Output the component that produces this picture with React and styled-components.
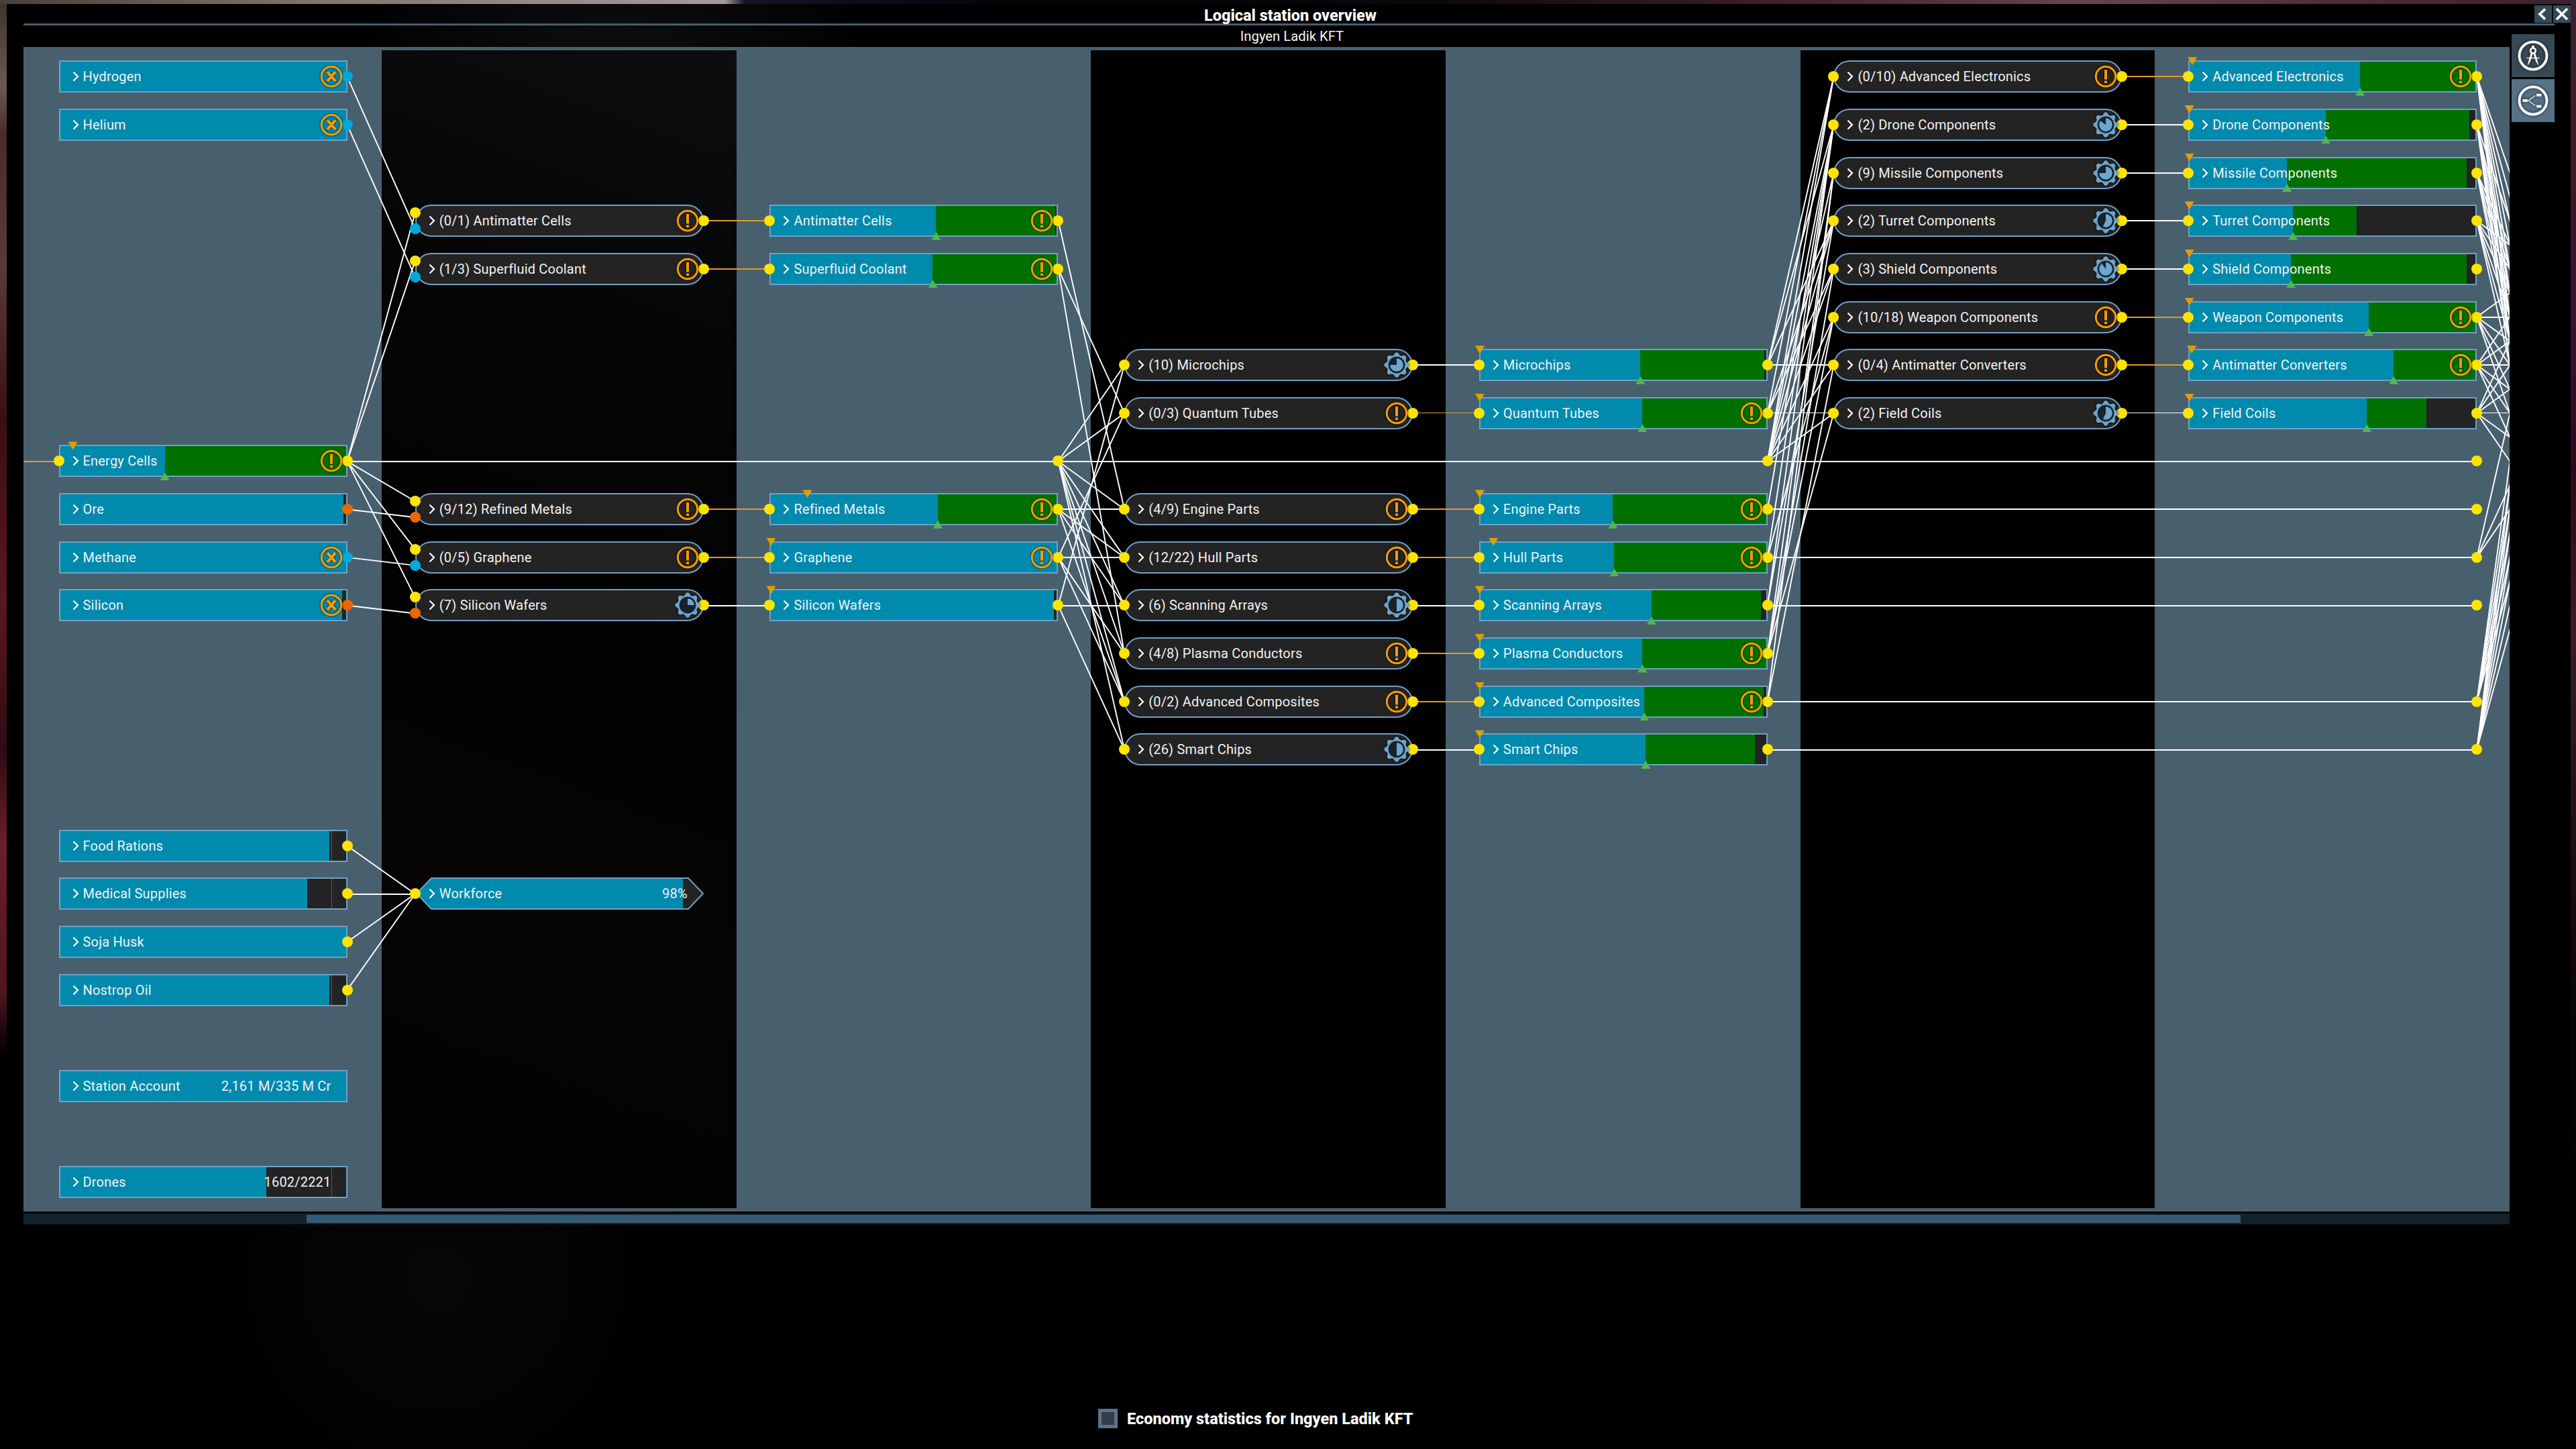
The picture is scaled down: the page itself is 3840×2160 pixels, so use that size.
import React from "react";
import styled, { createGlobalStyle, css } from "styled-components";

const c = {
  slate: "#485f6e",
  teal: "#008aad",
  green: "#007000",
  dark: "#232323",
  edge: "#6fa1c5",
  yellow: "#ffe400",
  blue: "#00a9dc",
  orange: "#eb6800",
  link: "#e59a28",
  warn: "#ff9c00",
};

const ROWS = 24;
const GRID_TOP = 8.4;
const GRID_H = 1720;
const NODE_W = 430;
const FIRST_W = 534;
const COL_W = 3172 / 6;

const GlobalStyle = createGlobalStyle`
  *, *::before, *::after { box-sizing: border-box; }
  body { margin: 0; background: #000; font-family: Roboto, "Liberation Sans", sans-serif; }
`;

const Page = styled.div`
  width: 3840px;
  height: 2160px;
  overflow: hidden;
  padding: 6px 8px 0 10px;
  background:
    linear-gradient(90deg, #4b3f3a 0, #85766f 500px, #a39a9c 1080px, #14142a 1110px, #050308 1500px, #08060a 2100px, #3a1c2a 2600px, #6a4250 3100px, #4c2c3a 3500px, #3c2230 3840px) 0 0 / 100% 6px no-repeat,
    linear-gradient(180deg, #3c332c 0, #6b5a50 130px, #4a2c26 200px, #5a3a34 400px, #3a0e16 620px, #5a1624 900px, #300a12 1120px, #6a1e2c 1260px, #501420 1480px, #000 1572px) 0 0 / 10px 100% no-repeat,
    linear-gradient(180deg, #3c2230 0, #3a1228 500px, #2a0a1c 700px, #3a1c2a 950px, #24101a 1200px, #0a0408 1500px, #000 1800px) 100% 0 / 8px 100% no-repeat,
    #000;
`;

const Window = styled.section`
  height: 2154px;
  padding-left: 25px;
  color: #f4f4f4;
  background:
    radial-gradient(ellipse 420px 500px at 900px 200px, #101114, transparent),
    radial-gradient(ellipse 420px 420px at 640px 1900px, #080505, transparent),
    #000;
`;

const Header = styled.header`
  display: flex;
  height: 29px;
  padding-top: 2px;
  gap: 2px;
`;

const Title = styled.h1`
  flex: 1;
  margin: 0;
  padding: 2px 0 0 36px;
  font-size: 23.5px;
  font-weight: 800;
  line-height: 27px;
  text-align: center;
  position: relative;
  z-index: 1;
  color: #fff;
`;

const WindowButton = styled.button`
  width: 26px;
  height: 26px;
  padding: 0;
  border: 0;
  background: #354a57;
  display: grid;
  place-items: center;
`;

const Divider = styled.div`
  width: 3773px;
  height: 3px;
  background: ${c.slate};
`;

const Main = styled.main`
  display: flex;
  gap: 3px;
`;

const Content = styled.div`
  width: 3706px;
`;

const Subtitle = styled.h2`
  height: 32px;
  margin: 0;
  padding: 4px 0 0 76px;
  font-size: 20.3px;
  font-weight: 400;
  line-height: 25px;
  text-align: center;
`;

const Panel = styled.div`
  position: relative;
  height: 1736px;
  overflow: hidden;
  display: grid;
  grid-template-columns: ${FIRST_W}px repeat(6, 1fr);
  background: ${c.slate};
`;

const Column = styled.div`
  display: grid;
  grid-template-rows: repeat(${ROWS}, ${GRID_H / ROWS}px);
  align-items: center;
  justify-items: center;
  margin: 5px 0;
  padding: ${GRID_TOP - 5}px 0 0 1px;
  background: ${(p) => (p.$index % 2 ? (p.$index === 1 ? "linear-gradient(200deg, #0d0e10 0, #050506 420px, #020202 900px, #060404 1300px, #020202 100%)" : "#010101") : "transparent")};
`;

const Links = styled.svg`
  position: absolute;
  inset: 0;
  z-index: 1;
  pointer-events: none;
`;

const Node = styled.div`
  position: relative;
  z-index: 2;
  grid-row: ${(p) => p.$row + 1};
  width: ${NODE_W}px;
  height: ${(p) => (p.$waypoint ? 0 : 48)}px;
  display: flex;
  align-items: center;
`;

const frame = css`
  position: absolute;
  inset: 0;
  border: 2px solid ${c.edge};
  overflow: hidden;
`;

const StorageFrame = styled.div`
  ${frame}
  background: ${(p) =>
    p.$seam
      ? `linear-gradient(90deg, transparent 404px, ${c.slate} 404px, ${c.slate} 405px, transparent 405px), ${c.dark}`
      : c.dark};
`;

const ProductionFrame = styled.div`
  ${frame}
  border-radius: 24px;
  background: ${c.dark};
`;

const Fill = styled.div`
  position: absolute;
  top: 0;
  bottom: 0;
  left: 0;
  background: ${(p) => p.$color};
`;

const HexFrame = styled.svg`
  position: absolute;
  inset: 0;
`;

const Label = styled.div`
  position: relative;
  flex: 1;
  display: flex;
  align-items: center;
  padding: 0 24px 0 20px;
  font-size: 20px;
  letter-spacing: 0.2px;
  line-height: 24px;
  white-space: nowrap;
  color: #f2f2f2;
`;

const Arrow = styled.svg`
  width: 10px;
  height: 16px;
  margin-right: 6px;
  flex: none;
`;

const Value = styled.span`
  margin-left: auto;
`;

const Dot = styled.i`
  position: absolute;
  left: ${(p) => (p.$side === "in" ? 0 : NODE_W)}px;
  top: calc(50% + ${(p) => p.$offset || 0}px);
  width: 16px;
  height: 16px;
  margin: -8px 0 0 -8px;
  border-radius: 50%;
  background: ${(p) => p.$color};
`;

const Marker = styled.i`
  position: absolute;
  width: 14px;
  height: 12px;
  margin-left: -7px;
  ${(p) =>
    p.$down
      ? css`
          top: -5px;
          background: #dfa000;
          clip-path: polygon(0 0, 100% 0, 50% 100%);
        `
      : css`
          bottom: -4.5px;
          background: #4fb852;
          clip-path: polygon(50% 0, 100% 100%, 0 100%);
        `}
`;

const StatusIcon = styled.svg`
  position: absolute;
  right: 4px;
  top: calc(50% - 20px);
  width: 40px;
  height: 40px;
  filter: drop-shadow(0 0 1.5px rgba(0, 0, 0, 0.8));
`;

const Sidebar = styled.nav`
  display: flex;
  flex-direction: column;
  gap: 3px;
  padding-top: 13px;
`;

const SideButton = styled.button`
  width: 64px;
  height: 64px;
  padding: 0;
  border: 0;
  display: grid;
  place-items: center;
  background: ${(p) => (p.$active ? "#567287" : "#364a56")};
`;

const SideIcon = styled.svg`
  width: 50px;
  height: 50px;
  filter: drop-shadow(0 0 2px rgba(0, 0, 0, 0.7));
`;

const ScrollTrack = styled.div`
  height: 16px;
  margin-top: 3px;
  padding: 2px 0 2px 422px;
  background: #14232b;
`;

const ScrollThumb = styled.div`
  width: 2883px;
  height: 12px;
  background: #345b76;
`;

const Footer = styled.label`
  display: flex;
  align-items: center;
  gap: 14px;
  margin-top: 275px;
  padding-left: 1602px;
  height: 29px;
  font-size: 23.5px;
  font-weight: 800;
  color: #fff;
`;

const CheckBox = styled.span`
  width: 29px;
  height: 29px;
  border: 5px solid #5a7489;
  background: #2f3f4a;
`;

const S = (row, name, fill, extra = {}) => ({ kind: "storage", row, name, fill, out: c.yellow, ...extra });
const P = (row, name, status, extra = {}) => ({
  kind: "production", row, name, status, inputs: [[c.yellow, 0]], out: c.yellow, ...extra,
});
const W = (row) => ({ kind: "waypoint", row, out: c.yellow });
const two = (color) => ({ inputs: [[c.yellow, -12], [color, 12]] });
const fed = { inputs: [[c.yellow, 0]] };

const columns = [
  [
    S(0, "Hydrogen", 428, { out: c.blue, status: "x" }),
    S(1, "Helium", 428, { out: c.blue, status: "x" }),
    S(8, "Energy Cells", 158, { ...fed, stock: 428, low: 21, status: "!" }),
    S(9, "Ore", 424, { out: c.orange }),
    S(10, "Methane", 428, { out: c.blue, status: "x" }),
    S(11, "Silicon", 422, { out: c.orange, status: "x" }),
    S(16, "Food Rations", 403),
    S(17, "Medical Supplies", 370),
    S(18, "Soja Husk", 428),
    S(19, "Nostrop Oil", 403),
    S(21, "Station Account", 428, { out: null, value: "2,161 M/335 M Cr" }),
    S(23, "Drones", 309, { out: null, value: "1602/2221" }),
  ],
  [
    P(3, "(0/1) Antimatter Cells", "!", two(c.blue)),
    P(4, "(1/3) Superfluid Coolant", "!", two(c.blue)),
    P(9, "(9/12) Refined Metals", "!", two(c.orange)),
    P(10, "(0/5) Graphene", "!", two(c.blue)),
    P(11, "(7) Silicon Wafers", 0.25, two(c.orange)),
    { kind: "workforce", row: 17, name: "Workforce", fill: 399, value: "98%", ...fed },
  ],
  [
    S(3, "Antimatter Cells", 248, { ...fed, stock: 426, status: "!" }),
    S(4, "Superfluid Coolant", 243, { ...fed, stock: 428, status: "!" }),
    W(8),
    S(9, "Refined Metals", 250.5, { ...fed, stock: 428, low: 56, status: "!" }),
    S(10, "Graphene", 428, { ...fed, low: 2, status: "!" }),
    S(11, "Silicon Wafers", 424, { ...fed, low: 2 }),
  ],
  [
    P(6, "(10) Microchips", 0.75),
    P(7, "(0/3) Quantum Tubes", "!"),
    P(9, "(4/9) Engine Parts", "!"),
    P(10, "(12/22) Hull Parts", "!"),
    P(11, "(6) Scanning Arrays", 0.5),
    P(12, "(4/8) Plasma Conductors", "!"),
    P(13, "(0/2) Advanced Composites", "!"),
    P(14, "(26) Smart Chips", 0.5),
  ],
  [
    S(6, "Microchips", 240.5, { ...fed, stock: 425, low: 1 }),
    S(7, "Quantum Tubes", 243.5, { ...fed, stock: 428, low: 1, status: "!" }),
    W(8),
    S(9, "Engine Parts", 199.5, { ...fed, stock: 428, low: 1, status: "!" }),
    S(10, "Hull Parts", 201.5, { ...fed, stock: 428, low: 21.5, status: "!" }),
    S(11, "Scanning Arrays", 257, { ...fed, stock: 420, low: 1 }),
    S(12, "Plasma Conductors", 243.5, { ...fed, stock: 428, low: 1, status: "!" }),
    S(13, "Advanced Composites", 246.5, { ...fed, stock: 424, low: 1, status: "!" }),
    S(14, "Smart Chips", 248.5, { ...fed, stock: 411.5, low: 1 }),
  ],
  [
    P(0, "(0/10) Advanced Electronics", "!"),
    P(1, "(2) Drone Components", 0.85),
    P(2, "(9) Missile Components", 0.75),
    P(3, "(2) Turret Components", 0.57),
    P(4, "(3) Shield Components", 0.9),
    P(5, "(10/18) Weapon Components", "!"),
    P(6, "(0/4) Antimatter Converters", "!"),
    P(7, "(2) Field Coils", 0.57),
  ],
  [
    S(0, "Advanced Electronics", 256, { ...fed, stock: 428, low: 6, status: "!" }),
    S(1, "Drone Components", 205, { ...fed, stock: 419, low: 1.5 }),
    S(2, "Missile Components", 147, { ...fed, stock: 415, low: 1.5 }),
    S(3, "Turret Components", 156, { ...fed, stock: 251, low: 1.5 }),
    S(4, "Shield Components", 153, { ...fed, stock: 415, low: 1.5 }),
    S(5, "Weapon Components", 269, { ...fed, stock: 428, low: 1.5, status: "!" }),
    S(6, "Antimatter Converters", 306, { ...fed, stock: 428, low: 5, status: "!" }),
    S(7, "Field Coils", 266, { ...fed, stock: 355, low: 1.5 }),
    W(8), W(9), W(10), W(11), W(13), W(14),
  ],
];

const midX = (k) => 0.5 + (k === 0 ? FIRST_W / 2 : FIRST_W + COL_W * (k - 0.5));
const inX = (k) => midX(k) - NODE_W / 2;
const outX = (k) => midX(k) + NODE_W / 2;
const rowY = (r) => GRID_TOP + (GRID_H / ROWS) * (r + 0.5);

const links = [];
const join = (k, from, to, offset = 0) =>
  links.push({ x1: outX(k), y1: rowY(from), x2: inX(k + 1), y2: rowY(to) + offset });

join(0, 0, 3, 12);
join(0, 1, 4, 12);
[3, 4, 9, 10, 11].forEach((r) => join(0, 8, r, -12));
[9, 10, 11].forEach((r) => join(0, r, r, 12));
[16, 17, 18, 19].forEach((r) => join(0, r, 17));

const refine = {
  3: [9],
  4: [7, 12],
  8: [6, 7, 9, 10, 11, 12, 13, 14],
  9: [9, 10, 11, 13],
  10: [7, 10, 12, 13],
  11: [6, 11, 14],
};
const assemble = {
  6: [0, 1, 3, 6],
  7: [0, 3, 4, 7],
  8: [0, 1, 2, 3, 4, 5, 6, 7],
  9: [1],
  10: [1, 5],
  11: [1, 3],
  12: [2, 4, 5, 7],
  13: [2, 6],
};
const equip = {
  0: [4, 5, 6, 7, 8, 9, 10, 11],
  1: [5, 7, 8, 9, 10, 11],
  2: [5, 6, 7, 8, 9],
  3: [4, 5, 6, 7, 8, 9],
  5: [4, 5, 6, 7, 8, 9],
  6: [4, 5, 6, 7, 8, 9],
  7: [4, 5, 6, 7, 8, 9],
  10: [4, 7, 8],
  13: [3, 4, 5, 6, 7, 8],
  14: [3, 4, 5, 6, 7, 8, 9],
};
[[2, refine], [4, assemble], [6, equip]].forEach(([k, map]) =>
  Object.entries(map).forEach(([from, targets]) => targets.forEach((to) => join(k, Number(from), to)))
);

[1, 3, 5].forEach((k) =>
  columns[k].forEach((n) => {
    if (n.kind === "production") {
      links.push({
        x1: outX(k), y1: rowY(n.row), x2: inX(k + 1), y2: rowY(n.row),
        color: n.status === "!" ? c.link : "#fff",
      });
    }
  })
);
links.push({ x1: 0, y1: rowY(8), x2: inX(0), y2: rowY(8), color: c.link });
links.push({ x1: outX(0), y1: rowY(8), x2: outX(6), y2: rowY(8) });
[9, 10, 11, 13, 14].forEach((r) => links.push({ x1: outX(4), y1: rowY(r), x2: outX(6), y2: rowY(r) }));

function LinkLayer() {
  return (
    <Links width="3706" height="1736">
      {links.map((l, i) => {
        const flat = l.y1 === l.y2;
        const y1 = flat ? Math.round(l.y1) : l.y1;
        const y2 = flat ? y1 : l.y2;
        const thin = flat && l.y1 === rowY(7);
        return (
          <line key={i} x1={l.x1} y1={thin ? y1 - 0.5 : y1} x2={l.x2} y2={thin ? y2 - 0.5 : y2}
            stroke={l.color || "#fff"} strokeWidth={flat ? (thin ? 1 : 2) : 1.9}
            shapeRendering={flat ? "crispEdges" : "auto"} />
        );
      })}
    </Links>
  );
}

const gearPath = (() => {
  const pts = [];
  for (let i = 0; i < 96; i++) {
    const a = (i / 96) * Math.PI * 2;
    const w = Math.cos(a * 8);
    const r = 16.8 + 1.9 * Math.sign(w) * Math.pow(Math.abs(w), 0.7);
    pts.push(`${(20 + r * Math.sin(a)).toFixed(2)} ${(20 - r * Math.cos(a)).toFixed(2)}`);
  }
  return `M${pts.join("L")}Z`;
})();

function Status({ value }) {
  if (typeof value === "number") {
    const a = value * Math.PI * 2;
    const x = 20 + 9.8 * Math.sin(a);
    const y = 20 - 9.8 * Math.cos(a);
    return (
      <StatusIcon viewBox="0 0 40 40">
        <path d={gearPath} fill="#6ea5cc" />
        <circle cx="20" cy="20" r="12.4" fill="#17222b" />
        <path d={`M20 20V10.2A9.8 9.8 0 ${value > 0.5 ? 1 : 0} 1 ${x} ${y}Z`} fill="#6ea5cc" />
      </StatusIcon>
    );
  }
  return (
    <StatusIcon viewBox="0 0 40 40" fill="none" stroke={c.warn}>
      <circle cx="20" cy="20" r="14.7" strokeWidth="2.9" />
      {value === "!" ? (
        <path d="M20 10V24.5M20 26.5V30" strokeWidth="4" />
      ) : (
        <path d="M14 13L26 27M26 13L14 27" strokeWidth="4.2" />
      )}
    </StatusIcon>
  );
}

function Frame({ node, seam }) {
  if (node.kind === "production") return <ProductionFrame />;
  if (node.kind === "workforce") {
    return (
      <HexFrame width="430" height="48">
        <path d="M2 24L24 1H407L429 24L407 47H24Z" fill={c.dark} />
        <path d={`M2 24L24 1H${node.fill}V47H24Z`} fill={c.teal} />
        <path d="M2 24L24 1H407L429 24L407 47H24Z" fill="none" stroke={c.edge} strokeWidth="2" />
      </HexFrame>
    );
  }
  return (
    <StorageFrame $seam={seam}>
      {node.stock && <Fill $color={c.green} style={{ width: node.stock - 2 }} />}
      <Fill $color={c.teal} style={{ width: node.fill - 2 }} />
    </StorageFrame>
  );
}

function FlowNode({ node, seam }) {
  if (node.kind === "waypoint") {
    return (
      <Node $row={node.row} $waypoint>
        <Dot $color={node.out} />
      </Node>
    );
  }
  return (
    <Node $row={node.row}>
      <Frame node={node} seam={seam} />
      {node.low && <Marker $down style={{ left: node.low }} />}
      {node.stock && <Marker style={{ left: node.fill }} />}
      {(node.inputs || []).map(([color, offset]) => (
        <Dot key={offset} $side="in" $color={color} $offset={offset} />
      ))}
      {node.out && <Dot $color={node.out} />}
      <Label>
        <Arrow viewBox="0 0 10 16">
          <path d="M1.5 1.5L8 8L1.5 14.5" fill="none" stroke="#fff" strokeWidth="2.2" />
        </Arrow>
        {node.name}
        {node.value && <Value>{node.value}</Value>}
      </Label>
      {node.status && <Status value={node.status} />}
    </Node>
  );
}

export default function App() {
  return (
    <Page>
      <GlobalStyle />
      <Window>
        <Header>
          <Title>Logical station overview</Title>
          <WindowButton aria-label="Back">
            <svg width="26" height="26" fill="none" stroke="#fff" strokeWidth="3.6">
              <path d="M16 5.5L8 13L16 20.5" />
            </svg>
          </WindowButton>
          <WindowButton aria-label="Close">
            <svg width="26" height="26" fill="none" stroke="#fff" strokeWidth="3.6">
              <path d="M5 5L21 21M21 5L5 21" />
            </svg>
          </WindowButton>
        </Header>
        <Divider />
        <Main>
          <Content>
            <Subtitle>Ingyen Ladik KFT</Subtitle>
            <Panel>
              <LinkLayer />
              {columns.map((nodes, k) => (
                <Column key={k} $index={k}>
                  {nodes.map((n) => (
                    <FlowNode key={n.row} node={n} seam={k === 0} />
                  ))}
                </Column>
              ))}
            </Panel>
            <ScrollTrack>
              <ScrollThumb />
            </ScrollTrack>
          </Content>
          <Sidebar>
            <SideButton aria-label="Construction">
              <SideIcon viewBox="0 0 50 50" fill="none" stroke="#f4f4f4">
                <circle cx="25" cy="25" r="20.5" strokeWidth="4" />
                <circle cx="25" cy="17.5" r="3.8" strokeWidth="2.8" />
                <path d="M25 10V14" strokeWidth="4" />
                <path d="M15.5 28.5H34.5" strokeWidth="1.6" />
                <path d="M22.2 20L24.3 22L20.5 34L17 39L18.5 33ZM27.8 20L25.7 22L29.5 34L33 39L31.5 33Z" fill="#f4f4f4" strokeWidth="0.6" />
              </SideIcon>
            </SideButton>
            <SideButton $active aria-label="Logical overview">
              <SideIcon viewBox="0 0 50 50" fill="none" stroke="#f4f4f4">
                <circle cx="25" cy="25" r="20.5" strokeWidth="4" />
                <path d="M28.5 17.5L18 25L28.5 32.5" strokeWidth="1.3" />
                <path d="M9.5 23H17V27H9.5ZM30 14.8H37.5V18.8H30ZM30 31.5H37.5V35.5H30Z" fill="#f4f4f4" stroke="none" />
              </SideIcon>
            </SideButton>
          </Sidebar>
        </Main>
        <Footer>
          <CheckBox />
          Economy statistics for Ingyen Ladik KFT
        </Footer>
      </Window>
    </Page>
  );
}
